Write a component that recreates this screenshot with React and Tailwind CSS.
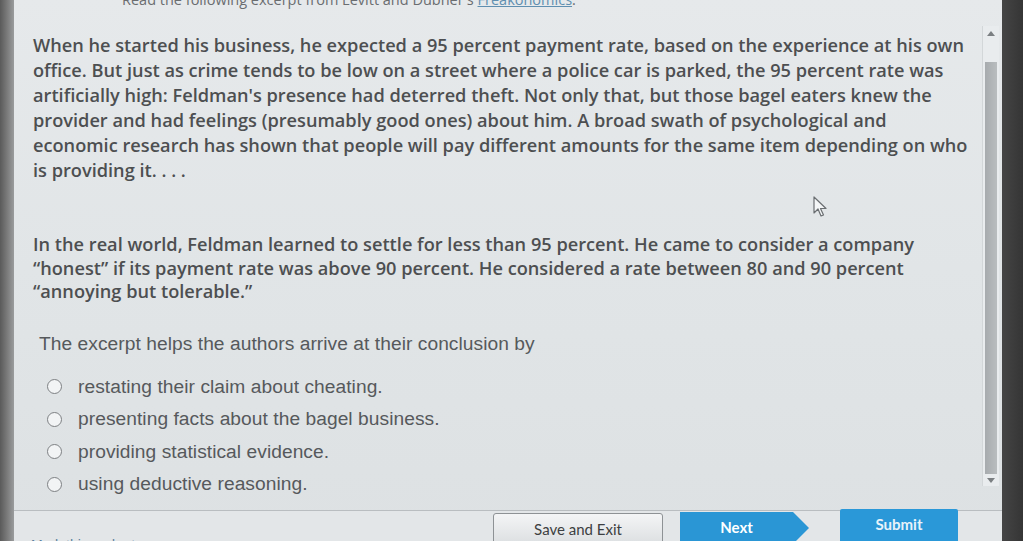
import React from 'react';

const passageOne = [
  'When he started his business, he expected a 95 percent payment rate, based on the experience at his own',
  'office. But just as crime tends to be low on a street where a police car is parked, the 95 percent rate was',
  "artificially high: Feldman's presence had deterred theft. Not only that, but those bagel eaters knew the",
  'provider and had feelings (presumably good ones) about him. A broad swath of psychological and',
  'economic research has shown that people will pay different amounts for the same item depending on who',
  'is providing it. . . .',
];

const passageTwo = [
  'In the real world, Feldman learned to settle for less than 95 percent. He came to consider a company',
  '\u201Chonest\u201D if its payment rate was above 90 percent. He considered a rate between 80 and 90 percent',
  '\u201Cannoying but tolerable.\u201D',
];

const options = [
  'restating their claim about cheating.',
  'presenting facts about the bagel business.',
  'providing statistical evidence.',
  'using deductive reasoning.',
];

function Cursor() {
  return (
    <svg className="absolute left-[813px] top-[196px]" width="16" height="22" viewBox="0 0 16 22">
      <path d="M1 1 L1 17 L5 13 L8 20 L10.5 19 L7.5 12.5 L13 12.5 Z" fill="#f4f6f7" stroke="#6b6f72" strokeWidth="1.2" strokeLinejoin="round" />
    </svg>
  );
}

export default function App() {
  return (
    <div className="w-[1023px] h-[541px] overflow-hidden flex bg-[#3a3a3a]">
      {/* left bezel */}
      <div className="w-[14px] shrink-0 bg-gradient-to-r from-[#5a5a5a] via-[#7a7a7a] to-[#9a9c9d]" />

      {/* screen panel */}
      <div className="w-[988px] shrink-0 flex flex-col bg-gradient-to-b from-[#e6e9eb] via-[#e1e5e7] to-[#dde1e3] relative">
        <div className="flex flex-1 min-h-0">
          <div className="flex-1 min-w-0 pl-[19px] overflow-hidden">
            <p className="-mt-[8px] h-[14px] leading-[16px] text-[14.5px] text-[#6a6d70] whitespace-nowrap pl-[89px]" style={{ fontFamily: '"Open Sans", sans-serif' }}>
              Read the following excerpt from Levitt and Dubner's{' '}
              <span className="underline text-[#5f8fb0]">Freakonomics</span>.
            </p>

            <div className="mt-[27px] text-[18.2px] font-semibold text-[#4d4f51]" style={{ fontFamily: '"Open Sans", sans-serif' }}>
              <div className="leading-[25px]">
                {passageOne.map((line) => (
                  <div key={line} className="whitespace-nowrap">{line}</div>
                ))}
              </div>
              <div className="mt-[50px] leading-[23.5px]">
                {passageTwo.map((line) => (
                  <div key={line} className="whitespace-nowrap">{line}</div>
                ))}
              </div>
            </div>

            <div className="pl-[6px] text-[19.2px] text-[#56595c] tracking-[0.05px]" style={{ fontFamily: '"Liberation Sans", Arial, sans-serif' }}>
              <p className="mt-[29px] leading-[22px]">The excerpt helps the authors arrive at their conclusion by</p>
              <div className="mt-[21px] flex flex-col gap-[10.5px]">
                {options.map((opt) => (
                  <label key={opt} className="flex items-center gap-[16px] leading-[22px]">
                    <span className="ml-[8px] w-[15px] h-[15px] rounded-full border-[1.5px] border-[#7d8083] bg-[#f2f4f5] shrink-0" />
                    <span>{opt}</span>
                  </label>
                ))}
              </div>
            </div>
          </div>

          {/* scrollbar */}
          <div className="w-[17px] shrink-0 mt-[26px] mb-[24px] mr-[3px] flex flex-col bg-[#e9ecee] border-l border-[#d3d7d9]">
            <div className="h-[14px] flex items-center justify-center">
              <svg width="8" height="5" viewBox="0 0 8 5"><path d="M0 5 L4 0 L8 5 Z" fill="#7b7f82" /></svg>
            </div>
            <div className="h-[22px]" />
            <div className="flex-1 mx-[2px] bg-gradient-to-r from-[#a7abae] to-[#b9bdbf]" />
            <div className="h-[12px] flex items-center justify-center">
              <svg width="8" height="5" viewBox="0 0 8 5"><path d="M0 0 L4 5 L8 0 Z" fill="#7b7f82" /></svg>
            </div>
          </div>
        </div>

        {/* footer */}
        <div className="h-[31px] shrink-0 border-t border-[#b9bdc0] flex items-start relative bg-[#e3e6e8]">
          <span className="absolute left-[17px] top-[24px] text-[14px] text-[#5a7f9c] whitespace-nowrap" style={{ fontFamily: '"Liberation Sans", Arial, sans-serif' }}>Mark this and return</span>
          <div className="ml-[479px] mt-[2px] w-[170px] h-[32px] rounded-[3px] border border-[#8e9295] bg-gradient-to-b from-[#f4f5f6] to-[#dcdfe1] flex justify-center pt-[4px] text-[15px] text-[#3d3f41]" style={{ fontFamily: 'Lato, sans-serif' }}>
            Save and Exit
          </div>
          <div className="ml-[17px] mt-[1px] flex h-[32px]">
            <div className="w-[113px] bg-[#2a96d5] flex justify-center pt-[4px] text-[15px] font-bold text-white" style={{ fontFamily: 'Lato, sans-serif' }}>
              Next
            </div>
            <svg width="16" height="32" viewBox="0 0 16 32"><path d="M0 0 L16 16 L0 32 Z" fill="#2a96d5" /></svg>
          </div>
          <div className="ml-[31px] -mt-[2px] w-[118px] h-[36px] rounded-[2px] bg-[#2a98d8] flex justify-center pt-[4px] text-[15px] font-bold text-[#e8f3fa]" style={{ fontFamily: 'Lato, sans-serif' }}>
            Submit
          </div>
        </div>
      </div>

      {/* right bezel */}
      <div className="flex-1 bg-gradient-to-r from-[#454545] to-[#353535]" />

      <Cursor />
    </div>
  );
}
